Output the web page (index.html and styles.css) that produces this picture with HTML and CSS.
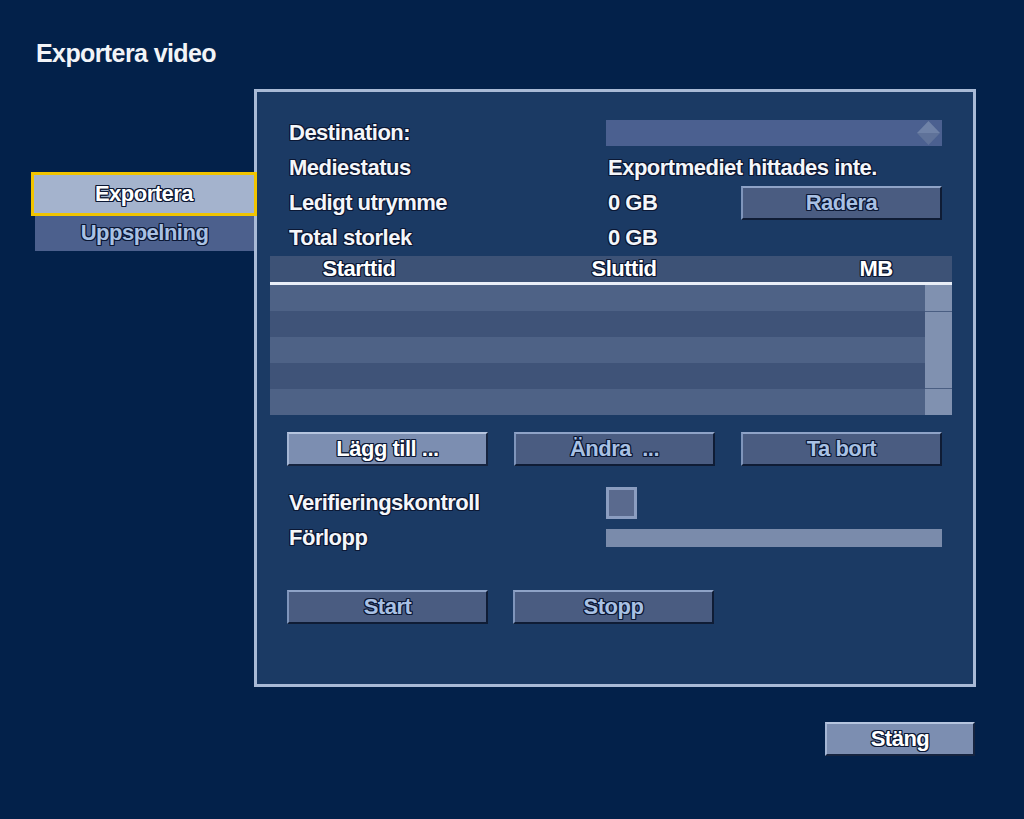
FILE: index.html
```html
<!DOCTYPE html>
<html lang="sv">
<head>
<meta charset="utf-8">
<title>Exportera video</title>
<link rel="stylesheet" href="styles.css">
</head>
<body>
<div class="screen">
  <h1 class="title">Exportera video</h1>
  <div class="main">
    <nav class="tabs">
      <div class="tab active ol">Exportera</div>
      <div class="tab inactive ol">Uppspelning</div>
    </nav>
    <section class="panel">
      <div class="row">
        <span class="label ol">Destination:</span>
        <div class="select">
          <svg class="diamond" width="23" height="24" viewBox="0 0 23 24">
            <polygon points="11.5,0 23,12 0,12" fill="#6f82a7"/>
            <polygon points="0,12 23,12 11.5,24" fill="#5f7299"/>
          </svg>
        </div>
      </div>
      <div class="row">
        <span class="label ol">Mediestatus</span>
        <span class="label ol">Exportmediet hittades inte.</span>
      </div>
      <div class="row">
        <span class="label ol">Ledigt utrymme</span>
        <div class="value-with-btn">
          <span class="label ol">0 GB</span>
          <button class="btn dark ol">Radera</button>
        </div>
      </div>
      <div class="row">
        <span class="label ol">Total storlek</span>
        <span class="label ol">0 GB</span>
      </div>

      <div class="table">
        <div class="thead">
          <span class="th ol">Starttid</span>
          <span class="th ol">Sluttid</span>
          <span class="th ol">MB</span>
        </div>
        <div class="tbody">
          <div class="rows">
            <div class="tr light"></div>
            <div class="tr dark"></div>
            <div class="tr light"></div>
            <div class="tr dark"></div>
            <div class="tr light"></div>
          </div>
          <div class="scrollbar">
            <div class="sb-btn"></div>
            <div class="sb-track"></div>
            <div class="sb-btn"></div>
          </div>
        </div>
      </div>

      <div class="btnrow three">
        <button class="btn light ol">Lägg till ...</button>
        <button class="btn dark ol">Ändra&nbsp; ...</button>
        <button class="btn dark ol">Ta bort</button>
      </div>

      <div class="row first-after-btns">
        <span class="label ol">Verifieringskontroll</span>
        <div class="checkbox"></div>
      </div>
      <div class="row">
        <span class="label ol">Förlopp</span>
        <div class="progress"></div>
      </div>

      <div class="btnrow two">
        <button class="btn dark ol">Start</button>
        <button class="btn dark ol">Stopp</button>
      </div>
    </section>
  </div>
  <div class="footer">
    <button class="btn light close ol">Stäng</button>
  </div>
</div>
</body>
</html>
```
FILE: styles.css
```css
html, body {
  margin: 0;
  padding: 0;
  background: #03214a;
}

body {
  width: 1024px;
  height: 819px;
  overflow: hidden;
  font-family: "Liberation Sans", Arial, sans-serif;
  font-weight: bold;
  color: #f4f6fa;
}

.screen {
  width: 945px;
  padding: 38px 0 0 31px;
}

.title {
  margin: 0 0 21px 5px;
  height: 30px;
  font-size: 25px;
  line-height: 30px;
  letter-spacing: -0.6px;
  font-weight: bold;
  color: #f2f4f8;
}

.ol {
  text-shadow:
    1px 0 0 #0b1733, -1px 0 0 #0b1733, 0 1px 0 #0b1733, 0 -1px 0 #0b1733,
    1px 1px 0 #0b1733, -1px -1px 0 #0b1733, 1px -1px 0 #0b1733, -1px 1px 0 #0b1733;
}

.main {
  display: flex;
  align-items: flex-start;
}

.tabs {
  width: 226px;
  flex: none;
  margin-top: 83px;
  margin-right: -3px;
  position: relative;
  z-index: 2;
  display: flex;
  flex-direction: column;
}

.tab {
  box-sizing: border-box;
  text-align: center;
  font-size: 22px;
  letter-spacing: -0.5px;
}

.tab.active {
  width: 226px;
  height: 44px;
  line-height: 38px;
  border: 3px solid #f1c400;
  background: #a4b3cd;
  color: #ffffff;
}

.tab.inactive {
  width: 219px;
  height: 35px;
  line-height: 34px;
  margin-left: 4px;
  background: #4c608d;
  color: #a9c1e3;
}

.panel {
  box-sizing: border-box;
  flex: none;
  width: 722px;
  height: 598px;
  border: 3px solid #a9bad6;
  background: #1b3a64;
  padding: 23px 31px 0 30px;
  display: flex;
  flex-direction: column;
}

.row {
  display: grid;
  grid-template-columns: 319px 1fr;
  align-items: center;
  height: 35px;
}

.label {
  font-size: 22px;
  line-height: 35px;
  letter-spacing: -0.5px;
  color: #f4f6fa;
  white-space: nowrap;
  padding-left: 2px;
}

.select {
  height: 26px;
  background: #4b6090;
  display: flex;
  align-items: center;
  justify-content: flex-end;
  padding-right: 2px;
}

.diamond {
  display: block;
}

.value-with-btn {
  display: flex;
  align-items: center;
  justify-content: space-between;
}

.btn {
  box-sizing: border-box;
  width: 201px;
  height: 34px;
  padding: 0;
  margin: 0;
  border: 2px solid;
  font-family: "Liberation Sans", Arial, sans-serif;
  font-weight: bold;
  font-size: 22px;
  letter-spacing: -0.5px;
  line-height: 28px;
  text-align: center;
}

.btn.dark {
  background: #4a5c81;
  color: #a9c1e4;
  border-color: #8fa3c7 #0f1c35 #0f1c35 #7f95bb;
}

.btn.light {
  background: #7c8eb1;
  color: #ffffff;
  border-color: #b6c5df #16243f #16243f #a5b6d4;
}

.table {
  margin: 1px -10px 0 -17px;
}

.thead {
  display: grid;
  grid-template-columns: 178px 352px 1fr;
  height: 26px;
  background: #3d5276;
  border-bottom: 3px solid #e9eef7;
}

.th {
  text-align: center;
  font-size: 22px;
  letter-spacing: -0.5px;
  line-height: 26px;
  color: #ffffff;
}

.tbody {
  display: flex;
  height: 130px;
}

.rows {
  flex: 1;
  display: flex;
  flex-direction: column;
}

.tr {
  height: 26px;
}

.tr.light {
  background: #4e6286;
}

.tr.dark {
  background: #3f5378;
}

.scrollbar {
  width: 27px;
  display: flex;
  flex-direction: column;
  background: #4a5e82;
}

.sb-btn {
  height: 26px;
  background: #8091b0;
}

.sb-track {
  flex: 1;
  margin: 1px 0;
  background: #8091b0;
}

.btnrow {
  display: flex;
  justify-content: space-between;
}

.btnrow.three {
  margin-top: 17px;
}

.btnrow.two {
  margin-top: 35px;
  justify-content: flex-start;
  gap: 25px;
}

.first-after-btns {
  margin-top: 19px;
}

.checkbox {
  box-sizing: border-box;
  width: 31px;
  height: 32px;
  border: 3px solid #8b9dc0;
  background: #5a6a8e;
}

.progress {
  height: 18px;
  background: #7a8bab;
}

.footer {
  display: flex;
  justify-content: flex-end;
  margin-top: 35px;
  padding-right: 1px;
}

.btn.close {
  width: 150px;
}
```
